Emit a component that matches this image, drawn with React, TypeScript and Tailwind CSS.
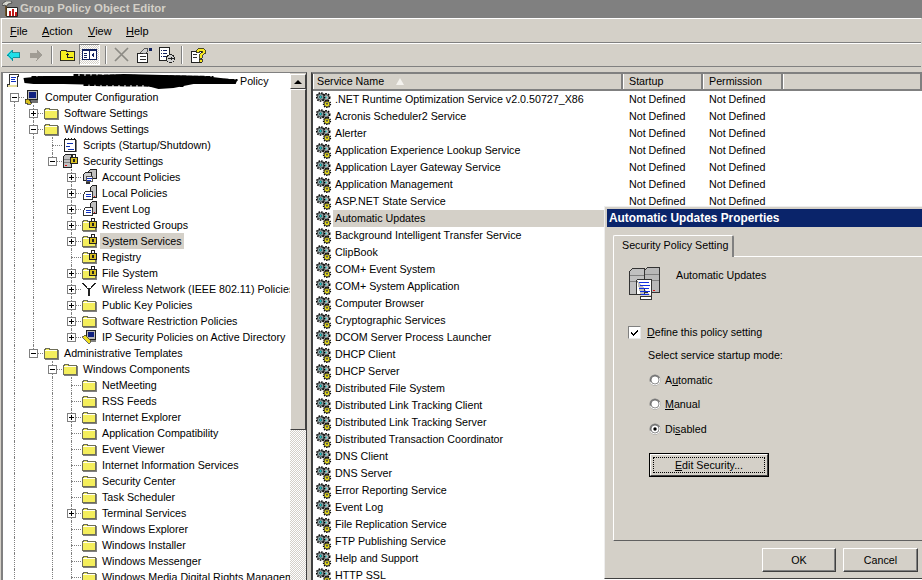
import type { ReactNode } from 'react';

type IconName = 'script' | 'computer' | 'folder' | 'scripts' | 'secure' | 'policy' | 'log' | 'lockFolder' | 'antenna' | 'ipsec';

interface TreeRow {
  level: number;
  label: string;
  icon: IconName;
  exp?: '+' | '-';
  guides: number[];
  selected?: boolean;
  stub?: 'top' | 'bottom';
}

const comp = [0, 2];

const treeRows: TreeRow[] = [
  { level: 0, label: 'Computer Configuration', icon: 'computer', exp: '-', guides: [], stub: 'bottom' },
  { level: 1, label: 'Software Settings', icon: 'folder', exp: '+', guides: [0] },
  { level: 1, label: 'Windows Settings', icon: 'folder', exp: '-', guides: [0] },
  { level: 2, label: 'Scripts (Startup/Shutdown)', icon: 'scripts', guides: [0, 1] },
  { level: 2, label: 'Security Settings', icon: 'secure', exp: '-', guides: [0, 1], stub: 'top' },
  { level: 3, label: 'Account Policies', icon: 'policy', exp: '+', guides: [0, 1] },
  { level: 3, label: 'Local Policies', icon: 'log', exp: '+', guides: [0, 1] },
  { level: 3, label: 'Event Log', icon: 'log', exp: '+', guides: [0, 1] },
  { level: 3, label: 'Restricted Groups', icon: 'lockFolder', exp: '+', guides: [0, 1] },
  { level: 3, label: 'System Services', icon: 'lockFolder', exp: '+', guides: [0, 1], selected: true },
  { level: 3, label: 'Registry', icon: 'lockFolder', guides: [0, 1] },
  { level: 3, label: 'File System', icon: 'lockFolder', exp: '+', guides: [0, 1] },
  { level: 3, label: 'Wireless Network (IEEE 802.11) Policies', icon: 'antenna', exp: '+', guides: [0, 1] },
  { level: 3, label: 'Public Key Policies', icon: 'folder', exp: '+', guides: [0, 1] },
  { level: 3, label: 'Software Restriction Policies', icon: 'folder', exp: '+', guides: [0, 1] },
  { level: 3, label: 'IP Security Policies on Active Directory', icon: 'ipsec', exp: '+', guides: [0, 1], stub: 'top' },
  { level: 1, label: 'Administrative Templates', icon: 'folder', exp: '-', guides: [0], stub: 'top' },
  { level: 2, label: 'Windows Components', icon: 'folder', exp: '-', guides: [0] },
  { level: 3, label: 'NetMeeting', icon: 'folder', guides: comp },
  { level: 3, label: 'RSS Feeds', icon: 'folder', guides: comp },
  { level: 3, label: 'Internet Explorer', icon: 'folder', exp: '+', guides: comp },
  { level: 3, label: 'Application Compatibility', icon: 'folder', guides: comp },
  { level: 3, label: 'Event Viewer', icon: 'folder', guides: comp },
  { level: 3, label: 'Internet Information Services', icon: 'folder', guides: comp },
  { level: 3, label: 'Security Center', icon: 'folder', guides: comp },
  { level: 3, label: 'Task Scheduler', icon: 'folder', guides: comp },
  { level: 3, label: 'Terminal Services', icon: 'folder', exp: '+', guides: comp },
  { level: 3, label: 'Windows Explorer', icon: 'folder', guides: comp },
  { level: 3, label: 'Windows Installer', icon: 'folder', guides: comp },
  { level: 3, label: 'Windows Messenger', icon: 'folder', guides: comp },
  { level: 3, label: 'Windows Media Digital Rights Management', icon: 'folder', guides: comp },
];

const services = [
  '.NET Runtime Optimization Service v2.0.50727_X86',
  'Acronis Scheduler2 Service',
  'Alerter',
  'Application Experience Lookup Service',
  'Application Layer Gateway Service',
  'Application Management',
  'ASP.NET State Service',
  'Automatic Updates',
  'Background Intelligent Transfer Service',
  'ClipBook',
  'COM+ Event System',
  'COM+ System Application',
  'Computer Browser',
  'Cryptographic Services',
  'DCOM Server Process Launcher',
  'DHCP Client',
  'DHCP Server',
  'Distributed File System',
  'Distributed Link Tracking Client',
  'Distributed Link Tracking Server',
  'Distributed Transaction Coordinator',
  'DNS Client',
  'DNS Server',
  'Error Reporting Service',
  'Event Log',
  'File Replication Service',
  'FTP Publishing Service',
  'Help and Support',
  'HTTP SSL',
];

function Px({ children, className = 'w-4 h-4' }: { children: ReactNode; className?: string }) {
  return (
    <svg viewBox="0 0 16 16" className={`${className} shrink-0`} shapeRendering="crispEdges">
      {children}
    </svg>
  );
}

function FolderShape() {
  return (
    <>
      <path d="M1.5 13.5V4.5H2.5V3.5H6.5V4.5H14.5V13.5Z" fill="#f4ee5c" stroke="#6e6e58" />
      <path d="M2 5H14V6H2Z" fill="#fffff0" />
      <path d="M15 5H16V14H15ZM2 14H16V15H2Z" fill="#808080" />
    </>
  );
}

function LockOverlay() {
  return (
    <>
      <path d="M10.5 3.5V1.5H13.5V3.5" fill="none" stroke="#222" />
      <path d="M8.5 4.5H15.5V10.5H8.5Z" fill="#d8c020" stroke="#222" />
      <path d="M11 6H13V9H11Z" fill="#222" />
    </>
  );
}

function Server({ x = 3 }: { x?: number }) {
  return (
    <g transform={`translate(${x} 0)`}>
      <path d="M1.5 3.5L3.5 1.5H9.5V14.5H1.5Z" fill="#c0c0c0" stroke="#222" />
      <path d="M2 6H9V7H2ZM2 9H9V10H2Z" fill="#808080" />
      <path d="M3 12H5V13H3Z" fill="#e01010" />
    </g>
  );
}

function TreeIcon({ name }: { name: IconName }) {
  switch (name) {
    case 'folder':
      return (
        <Px>
          <FolderShape />
        </Px>
      );
    case 'lockFolder':
      return (
        <Px>
          <FolderShape />
          <LockOverlay />
        </Px>
      );
    case 'secure':
      return (
        <Px>
          <Server x={0} />
          <LockOverlay />
        </Px>
      );
    case 'computer':
      return (
        <Px>
          <path d="M3.5 1.5H13.5V10.5H3.5Z" fill="#b8b8b8" stroke="#222" />
          <path d="M5 3H12V9H5Z" fill="#102080" />
          <path d="M6 11H14V14H6Z" fill="#707070" />
          <path d="M1 10H5V11H6V13H7V15H3V14H1Z" fill="#d8c020" stroke="#222" strokeWidth="0.7" />
        </Px>
      );
    case 'scripts':
      return (
        <Px>
          <path d="M2.5 2.5H13.5V14.5H2.5Z" fill="#fff" stroke="#222" />
          <path d="M3 1H4V3H3ZM6 1H7V3H6ZM9 1H10V3H9ZM12 1H13V3H12Z" fill="#222" />
          <path d="M14 3H15V15H14Z" fill="#808080" />
          <path d="M5 6H11V7H5ZM4 9H8V10H4ZM6 12H12V13H6Z" fill="#1030b0" />
        </Px>
      );
    case 'policy':
      return (
        <Px>
          <path d="M7.5 2.5L9.5 0.5H15.5V9.5H7.5Z" fill="#c0c0c0" stroke="#222" />
          <path d="M2.5 5.5L4.5 3.5H10.5V11.5H2.5Z" fill="#d0d0d0" stroke="#222" />
          <path d="M5.5 7.5H11.5V12.5H5.5Z" fill="#fff" stroke="#555" />
          <path d="M6 9H11V10H6ZM6 11H10V12H6Z" fill="#1030c0" />
          <path d="M5 13H9V15H5Z" fill="#333" />
        </Px>
      );
    case 'log':
      return (
        <Px>
          <path d="M9.5 2.5L11.5 0.5H15.5V12.5H9.5Z" fill="#c0c0c0" stroke="#222" />
          <path d="M4.5 6.5H11.5V14.5H2.5V9.5Z" fill="#fff" stroke="#333" />
          <path d="M5 9H10V10H5ZM5 11H10V12H5Z" fill="#1030c0" />
          <path d="M13 11H14V12H13Z" fill="#e01010" />
        </Px>
      );
    case 'antenna':
      return (
        <Px>
          <path d="M7 7H9V15H7ZM1 2H3V3H4V4H5V5H6V7H7V8H6V7H5V6H4V5H3V4H2V3H1ZM13 2H15V3H14V4H13V5H12V6H11V7H10V8H9V7H10V5H11V4H12V3H13Z" fill="#222" />
        </Px>
      );
    case 'ipsec':
      return (
        <Px>
          <path d="M5.5 1.5H14.5V10.5H5.5Z" fill="#b8b8b8" stroke="#222" />
          <path d="M7 3H13V8H7Z" fill="#102080" />
          <path d="M8 11H15V13H8Z" fill="#808080" />
          <path d="M1 8L4 6L10 12L8 15Z" fill="#f0e020" stroke="#333" strokeWidth="0.7" />
        </Px>
      );
    default:
      return (
        <Px>
          <path d="M3.5 1.5H12.5V3.5H11.5V13.5H1.5V11.5H3.5Z" fill="#fff" stroke="#333" />
          <path d="M5 4H10V5H5ZM5 6H9V7H5ZM5 8H10V9H5Z" fill="#1030c0" />
          <path d="M2 12H11V14H2Z" fill="#e8e0a0" />
        </Px>
      );
  }
}

function GearIcon() {
  return (
    <svg viewBox="0 0 16 16" className="w-4 h-4 shrink-0">
      <circle cx="10" cy="5.5" r="3.7" fill="none" stroke="#000" strokeWidth="1.6" strokeDasharray="1.6 1.1" />
      <circle cx="10" cy="5.5" r="2.9" fill="#b8b8b8" stroke="#222" strokeWidth="0.8" />
      <circle cx="10" cy="5.5" r="1" fill="#40d0d0" />
      <circle cx="4.6" cy="5" r="4" fill="none" stroke="#000" strokeWidth="1.6" strokeDasharray="1.6 1.1" />
      <circle cx="4.6" cy="5" r="3.2" fill="#98b0b4" stroke="#222" strokeWidth="0.8" />
      <circle cx="4.6" cy="5" r="1.3" fill="#10d0d0" stroke="#222" strokeWidth="0.5" />
      <circle cx="11" cy="12" r="3.5" fill="none" stroke="#000" strokeWidth="1.3" strokeDasharray="1.4 1" />
      <circle cx="11" cy="12" r="2.8" fill="#f4e818" stroke="#222" strokeWidth="0.8" />
      <circle cx="11" cy="11.6" r="1.2" fill="#555" />
    </svg>
  );
}

function Mnemonic({ first, rest, pre = '' }: { first: string; rest: string; pre?: string }) {
  return (
    <span>
      {pre}
      <span className="underline underline-offset-1">{first}</span>
      {rest}
    </span>
  );
}

function Toolbar() {
  return (
    <div className="h-[24px] flex items-center pl-[4px] border-b border-b-[#808080]">
      <svg viewBox="0 0 14 12" className="w-[14px] h-3 shrink-0" shapeRendering="crispEdges">
        <path d="M0.5 6L6.5 0.5V3.5H13.5V8.5H6.5V11.5Z" fill="#20e0e8" stroke="#108088" strokeWidth="0.8" />
      </svg>
      <svg viewBox="0 0 14 12" className="ml-[9px] w-[14px] h-3 shrink-0" shapeRendering="crispEdges">
        <path d="M13.5 6L7.5 0.5V3.5H0.5V8.5H7.5V11.5Z" fill="#a09c94" />
      </svg>
      <div className="ml-[8px] w-[2px] h-[18px] border-l border-l-[#808080] border-r border-r-white" />
      <Px className="ml-[7px] w-[15px] h-[15px]">
        <path d="M0.5 14.5V4.5H1.5V3.5H6.5V4.5H15.5V14.5Z" fill="#f6f020" stroke="#222" />
        <path d="M8 6L5 9H7V12H14V11H9V9H11Z" fill="#222" />
      </Px>
      <div className="ml-[4px] w-[21px] h-[21px] border border-t-[#808080] border-l-[#808080] border-r-white border-b-white flex items-center justify-center bg-[repeating-conic-gradient(#d4d0c8_0_25%,#ffffff_0_50%)] bg-size-[2px_2px]">
        <svg viewBox="0 0 15 11" className="w-[15px] h-[11px]" shapeRendering="crispEdges">
          <path d="M0.5 0.5H14.5V10.5H0.5Z" fill="#fff" stroke="#102060" />
          <path d="M0 0H15V2H0ZM7 0H8V11H7Z" fill="#102060" />
          <path d="M2 4H5V5H2ZM2 6H5V7H2ZM2 8H5V9H2Z" fill="#102060" />
          <path d="M12 3V9L9 6Z" fill="#102060" />
        </svg>
      </div>
      <div className="ml-[5px] w-[2px] h-[18px] border-l border-l-[#808080] border-r border-r-white" />
      <svg viewBox="0 0 15 15" className="ml-[7px] w-[15px] h-[15px] shrink-0">
        <path d="M1 1L14 14M14 1L1 14" stroke="#8c8a84" strokeWidth="1.7" />
      </svg>
      <Px className="ml-[7px] w-4 h-4">
        <path d="M1.5 6.5H11.5V15.5H1.5Z" fill="#fff" stroke="#222" />
        <path d="M4 9H10V10H4ZM4 12H10V13H4Z" fill="#333" />
        <path d="M4 6L9 1H11L12 4L9 7Z" fill="#d0d0d0" stroke="#222" strokeWidth="0.7" />
        <path d="M13 1H16V4H13Z" fill="#102060" />
      </Px>
      <Px className="ml-[7px] w-4 h-4">
        <path d="M0.5 0.5H10.5V13.5H0.5Z" fill="#fff" stroke="#222" />
        <path d="M2 3H3V4H2ZM4 3H8V4H4ZM2 6H3V7H2ZM4 6H8V7H4ZM2 9H3V10H2ZM4 9H7V10H4Z" fill="#102060" />
        <circle cx="11.5" cy="11.5" r="4" fill="#d0d0d0" stroke="#222" />
        <path d="M9 11H12V9.5L14.5 11.5L12 13.5V12H9Z" fill="#222" />
      </Px>
      <div className="ml-[6px] w-[2px] h-[18px] border-l border-l-[#808080] border-r border-r-white" />
      <Px className="ml-[8px] w-4 h-4">
        <path d="M0.5 4.5H10.5V15.5H0.5Z" fill="#fff" stroke="#222" />
        <path d="M2 7H6V8H2ZM2 10H6V11H2Z" fill="#333" />
        <path d="M5 3.5L8 1H12L14.5 3.5V6L11 8.5V11H8V7.5L11 5.5V4H9L8 5.5H5Z" fill="#f8e820" stroke="#222" strokeWidth="0.8" />
        <path d="M8 12H11V15H8Z" fill="#f8e820" stroke="#222" strokeWidth="0.8" />
      </Px>
    </div>
  );
}

function Expander({ sign }: { sign: '+' | '-' }) {
  return (
    <div className="relative w-[9px] h-[9px] bg-white border border-[#808080] shrink-0">
      <div className="absolute left-[1px] top-[3px] w-[5px] h-[1px] bg-black" />
      {sign === '+' && <div className="absolute left-[3px] top-[1px] w-[1px] h-[5px] bg-black" />}
    </div>
  );
}

function TreeLine({ row }: { row: TreeRow }) {
  const cols = Array.from({ length: row.level }, (_, i) => i);
  const own = row.stub === 'top' ? 'top-0 h-2' : row.stub === 'bottom' ? 'top-2 h-2' : 'top-0 h-4';
  return (
    <div className="h-4 flex items-center pl-[2px] whitespace-nowrap">
      {cols.map(i => (
        <div key={i} className="w-[19px] h-4 shrink-0 flex justify-center">
          {row.guides.includes(i) && <div className="h-4 border-l border-dotted border-l-[#808080]" />}
        </div>
      ))}
      <div className="relative w-[19px] h-4 shrink-0 flex items-center justify-center">
        <div className={`absolute left-[9px] ${own} border-l border-dotted border-l-[#808080]`} />
        <div className="absolute left-[9px] top-[8px] w-[10px] border-t border-dotted border-t-[#808080]" />
        {row.exp && (
          <div className="relative">
            <Expander sign={row.exp} />
          </div>
        )}
      </div>
      <TreeIcon name={row.icon} />
      <span className={`ml-[3px] px-[2px] h-4 leading-4 ${row.selected ? 'bg-[#d4d0c8]' : ''}`}>{row.label}</span>
    </div>
  );
}

function TreePane() {
  return (
    <div className="w-[306px] h-full shrink-0 flex bg-white border-t border-l-2 border-t-[#808080] border-l-[#808080] border-r border-r-[#404040] overflow-hidden">
      <div className="w-[287px] shrink-0 overflow-hidden">
        <div className="h-4 flex items-center pl-[3px] whitespace-nowrap">
          <TreeIcon name="script" />
          <svg viewBox="0 0 215 16" className="ml-[1px] w-[216px] h-4 shrink-0">
            <path d="M0 5L20 3L60 3L100 1L140 2L180 3L214 7L212 11L170 11L150 15L135 16L120 12L80 12L40 11L10 11L1 10Z" fill="#000" />
            <path d="M8 4L214 7M4 8L212 10M50 2L190 4M60 12L160 13" stroke="#000" strokeWidth="2" strokeDasharray="5 1" />
          </svg>
          <span className="ml-[1px]">Policy</span>
        </div>
        {treeRows.map(row => (
          <TreeLine key={row.label} row={row} />
        ))}
      </div>
      <div className="flex-1 flex flex-col">
        <div className="h-[1px] bg-[#d4d0c8]" />
        <div className="h-[15px] flex items-center justify-center bg-[#d4d0c8] border border-t-white border-l-white border-r-[#404040] border-b-[#404040]">
          <div className="border-x-[4px] border-x-transparent border-b-[4px] border-b-black" />
        </div>
        <div className="h-[341px] bg-[#d4d0c8] border border-t-white border-l-white border-r-[#404040] border-b-[#404040]" />
        <div className="flex-1 bg-[repeating-conic-gradient(#d4d0c8_0_25%,#ffffff_0_50%)] bg-size-[2px_2px]" />
      </div>
    </div>
  );
}

function HeaderCell({ width, pad = 'pl-[5px]', children }: { width?: string; pad?: string; children?: ReactNode }) {
  return (
    <div className={`${width ?? 'flex-1'} ${pad} h-full flex items-center border-r-2 border-r-[#808080] border-l border-l-white`}>
      {children}
    </div>
  );
}

function ServiceList() {
  return (
    <div className="flex-1 min-w-0 h-full bg-white border-t-2 border-l-2 border-t-[#808080] border-l-[#404040] overflow-hidden">
      <div className="h-[17px] flex bg-[#d4d0c8] border-b-2 border-b-[#808080] whitespace-nowrap">
        <HeaderCell width="w-[310px]" pad="pl-[3px]">
          <span>Service Name</span>
          <div className="ml-[12px] border-x-[4px] border-x-transparent border-b-[7px] border-b-[#f4f2ee]" />
        </HeaderCell>
        <HeaderCell width="w-[80px]">Startup</HeaderCell>
        <HeaderCell width="w-[80px]">Permission</HeaderCell>
        <HeaderCell />
      </div>
      {services.map(name => (
        <div key={name} className="h-[17px] flex items-center pl-[3px] whitespace-nowrap">
          <GearIcon />
          <div className={`w-[291px] pl-[2px] h-[17px] leading-[17px] ml-[1px] ${name === 'Automatic Updates' ? 'bg-[#d4d0c8]' : ''}`}>{name}</div>
          <div className={`w-[80px] pl-[5px] leading-[17px] ${name === 'Automatic Updates' ? 'bg-[#d4d0c8]' : ''}`}>Not Defined</div>
          <div className="w-[80px] pl-[5px] leading-[17px]">Not Defined</div>
        </div>
      ))}
    </div>
  );
}

function Radio({ checked, children }: { checked?: boolean; children: ReactNode }) {
  return (
    <div className="flex items-center h-[14px]">
      <svg viewBox="0 0 12 12" className="w-3 h-3 shrink-0">
        <circle cx="6" cy="6" r="5.5" fill="#808080" />
        <path d="M1 8A5.5 5.5 0 0 0 11 8A5.5 5.5 0 0 0 11 4Z" fill="#fff" />
        <circle cx="6" cy="6" r="4" fill="#fff" stroke="#404040" strokeWidth="0.6" />
        {checked && <circle cx="6" cy="6" r="1.7" fill="#000" />}
      </svg>
      <span className="ml-[4px]">{children}</span>
    </div>
  );
}

function RaisedButton({ children, className }: { children: ReactNode; className: string }) {
  return (
    <div className={`${className} h-[24px] flex items-center justify-center bg-[#d4d0c8] border border-t-white border-l-white border-r-[#404040] border-b-[#404040] shadow-[inset_-1px_-1px_0_#808080]`}>
      {children}
    </div>
  );
}

function DialogIcon() {
  return (
    <svg viewBox="0 0 33 34" className="w-[33px] h-[34px] shrink-0" shapeRendering="crispEdges">
      <path d="M1.5 5.5L4.5 2.5H16.5V28.5H1.5Z" fill="#c0c0c0" stroke="#333" />
      <path d="M16.5 4.5L19.5 1.5H31.5V26.5H16.5Z" fill="#b8b8b8" stroke="#333" />
      <path d="M2 9H16V10H2ZM2 15H16V16H2ZM17 8H31V9H17ZM17 14H31V15H17Z" fill="#808080" />
      <path d="M8.5 13.5H23.5V30.5H12.5V33.5H23.5V30.5M8.5 13.5V28.5H12.5" fill="#fff" stroke="#333" />
      <path d="M11 16H21V17H11ZM12 19H22V20H12ZM11 22H21V23H11ZM12 25H22V26H12ZM13 28H21V29H13Z" fill="#1030e0" />
      <path d="M25 24H27V25H25Z" fill="#e01010" />
    </svg>
  );
}

function PropertiesDialog() {
  return (
    <div className="absolute left-[604px] top-[206px] w-[340px] h-[373px] bg-[#d4d0c8] border border-t-[#eeeeee] border-l-[#eeeeee] border-b-[#404040] pl-[2px] pt-[2px]">
      <div className="h-[18px] bg-[#0a246a] text-white text-[11.9px] font-bold leading-[18px] pl-[2px]">Automatic Updates Properties</div>
      <div className="pl-[6px] pt-[8px] w-[330px]">
        <div className="flex items-end">
          <div className="w-[121px] h-[22px] pl-[8px] leading-[19px] border-t border-l border-r-2 border-t-white border-l-white border-r-[#808080] rounded-t-[2px]">Security Policy Setting</div>
          <div className="flex-1 border-b border-b-white" />
        </div>
        <div className="h-[284px] border-l border-b border-l-white border-b-[#606060] pl-[14px] pt-[9px] flex flex-col">
          <div className="flex">
            <DialogIcon />
            <span className="ml-[15px] mt-[1px]">Automatic Updates</span>
          </div>
          <div className="flex items-center mt-[25px] h-[14px]">
            <div className="w-[13px] h-[13px] bg-white border border-t-[#808080] border-l-[#808080] border-r-[#e8e8e8] border-b-[#e8e8e8] shrink-0">
              <svg viewBox="0 0 11 11" className="w-[11px] h-[11px]" shapeRendering="crispEdges">
                <path d="M2 4V7L4 9L9 4V2L4 7Z" fill="#000" />
              </svg>
            </div>
            <span className="ml-[6px]">
              <Mnemonic first="D" rest="efine this policy setting" />
            </span>
          </div>
          <div className="ml-[20px] mt-[9px] leading-[14px]">Select service startup mode:</div>
          <div className="ml-[21px] mt-[11px] flex flex-col gap-[10px]">
            <Radio>
              <Mnemonic pre="A" first="u" rest="tomatic" />
            </Radio>
            <Radio>
              <Mnemonic first="M" rest="anual" />
            </Radio>
            <div className="mt-[1px]">
              <Radio checked>
                <Mnemonic pre="Di" first="s" rest="abled" />
              </Radio>
            </div>
          </div>
          <div className="ml-[21px] mt-[17px] w-[120px] h-[24px] bg-[#d4d0c8] border border-black">
            <div className="h-full border border-t-white border-l-white border-r-[#404040] border-b-[#404040] p-[2px]">
              <div className="h-full border border-dotted border-black flex items-center justify-center">
                <Mnemonic first="E" rest="dit Security..." />
              </div>
            </div>
          </div>
        </div>
        <div className="flex pt-[7px] pl-[149px] gap-[7px]">
          <RaisedButton className="w-[74px]">OK</RaisedButton>
          <RaisedButton className="w-[75px]">Cancel</RaisedButton>
        </div>
      </div>
    </div>
  );
}

export default function App() {
  return (
    <div className="relative w-[922px] h-[580px] overflow-hidden flex flex-col bg-[#d4d0c8] text-[10.7px] text-black font-['Liberation_Sans',Arial,sans-serif]">
      <div className="h-[18px] shrink-0 flex items-center bg-[#808080] text-[#d4d0c8] font-bold pl-[2px] whitespace-nowrap">
        <svg viewBox="0 0 16 16" className="w-4 h-4 shrink-0">
          <path d="M4.5 6.5H15.5V15.5H4.5Z" fill="#fff" stroke="#222" />
          <path d="M7 10H9V15H7ZM10 8H12V15H10ZM13 11H15V15H13Z" fill="#c01818" />
          <path d="M4 5V15" stroke="#604010" strokeWidth="1.5" />
          <path d="M0 3L4 0H9L10 2L6 3L5 5L2 4L1 5Z" fill="#d8d8d0" stroke="#222" strokeWidth="0.6" />
        </svg>
        <span className="ml-[2px] text-[11.4px]">Group Policy Object Editor</span>
      </div>
      <div className="shrink-0 mx-[1px] border-t border-t-white border-l border-l-white">
        <div className="h-[24px] pt-[2px] flex items-center pl-[8px] border-b border-b-[#808080] shadow-[0_1px_0_#fff] text-[11px]">
          <div className="w-[32px]">
            <Mnemonic first="F" rest="ile" />
          </div>
          <div className="w-[46px]">
            <Mnemonic first="A" rest="ction" />
          </div>
          <div className="w-[38px]">
            <Mnemonic first="V" rest="iew" />
          </div>
          <Mnemonic first="H" rest="elp" />
        </div>
        <Toolbar />
      </div>
      <div className="flex-1 min-h-0 flex pt-[5px] pl-[1px]">
        <TreePane />
        <div className="w-[4px] shrink-0" />
        <ServiceList />
      </div>
      <PropertiesDialog />
    </div>
  );
}
